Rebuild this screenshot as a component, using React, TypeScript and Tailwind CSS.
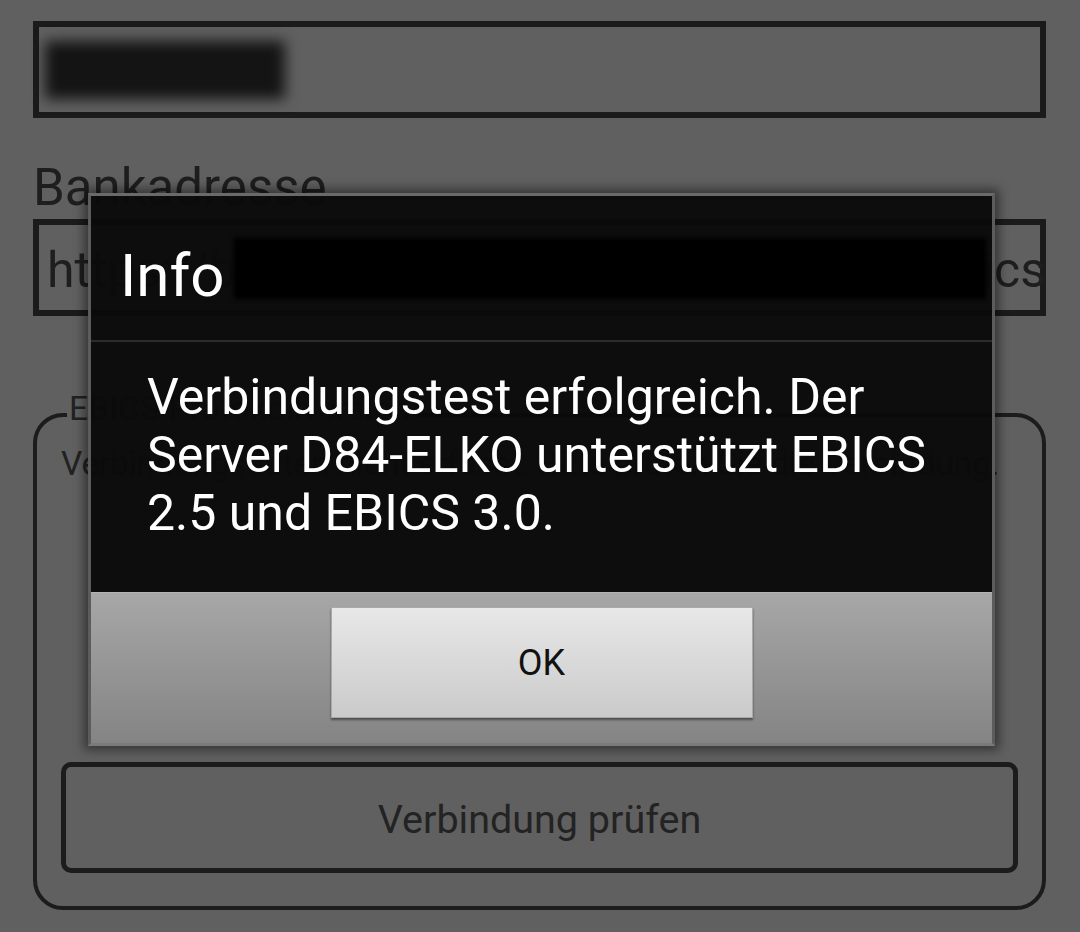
import React from "react";

export default function App() {
  return (
    <div className="relative w-[1080px] h-[932px] overflow-hidden bg-[#606060] font-['Roboto','Liberation_Sans',sans-serif] text-[#1c1c1c]">
      {/* underlying form (dimmed) */}
      <div className="flex flex-col pl-[33px] pr-[34px] pt-[21px]">
        <div className="flex h-[97px] items-center border-[6px] border-[#1b1b1b] pl-[6px]">
          <div className="h-[58px] w-[240px] bg-[#141414] blur-[7px]" />
        </div>
        <div className="mt-[44px] text-[51px] leading-[51px] text-[#1e1e1e]">Bankadresse</div>
        <div className="mt-[6px] flex h-[97px] items-center justify-between border-[6px] border-[#1b1b1b] pl-[8px] pt-[4px] text-[50px] leading-[50px] text-[#1e1e1e]">
          <span>https://b</span>
          <span className="mr-[-6px]">ics</span>
        </div>
        <fieldset className="mt-[76px] rounded-[30px] border-[4px] border-[#1c1c1c] px-[24px] pb-[33px]">
          <legend className="ml-[6px] px-[2px] pb-[12px] text-[33.5px] leading-[33px] text-[#222]">
            EBICS-Protokollversion
          </legend>
          <div className="mt-[10px] whitespace-nowrap text-[33.5px] leading-[33px] tracking-[-0.2px] text-[#222]">
            Verbindungsdaten nicht erfasst. Bitte prüfen Sie die Verbindung.
          </div>
          <div className="mt-[282px] flex h-[111px] items-center justify-center rounded-[10px] border-[5px] border-[#1c1c1c] pt-[4px] text-[39.5px] text-[#232323]">
            Verbindung prüfen
          </div>
        </fieldset>
      </div>

      {/* dialog */}
      <div className="absolute left-[88px] top-[193px] flex h-[553px] w-[907px] flex-col border-[3px] border-[#5c5c5c] border-t-[#6a6a6a] border-b-[#7a7a7a] shadow-[0_0_10px_4px_rgba(0,0,0,0.45)]">
        <div className="flex h-[144px] items-start bg-[#0a0a0a]/[0.97] pl-[29px] pt-[50px] text-[60px] leading-[60px] text-white">
          Info
        </div>
        <div className="h-[2px] bg-[#2c2c2c]" />
        <div className="h-[250px] bg-[#0a0a0a]/[0.97] pl-[56px] pr-[36px] pt-[26px] text-[50px] leading-[58px] text-white">
          Verbindungstest erfolgreich. Der Server D84-ELKO unterstützt EBICS 2.5 und EBICS 3.0.
        </div>
        <div className="flex flex-1 justify-center border-t border-[#b4b4b4] bg-gradient-to-b from-[#a7a7a7] to-[#848484] pt-[14px]">
          <div className="flex h-[111px] w-[422px] items-center justify-center border border-[#a9a9a9] bg-gradient-to-b from-[#e8e8e8] to-[#cacaca] text-[36px] text-[#111] shadow-[0_2px_2px_rgba(0,0,0,0.45)]">
            OK
          </div>
        </div>
      </div>

      {/* redaction */}
      <div className="absolute left-[234px] top-[238px] h-[61px] w-[752px] bg-black blur-[2px]" />
    </div>
  );
}
